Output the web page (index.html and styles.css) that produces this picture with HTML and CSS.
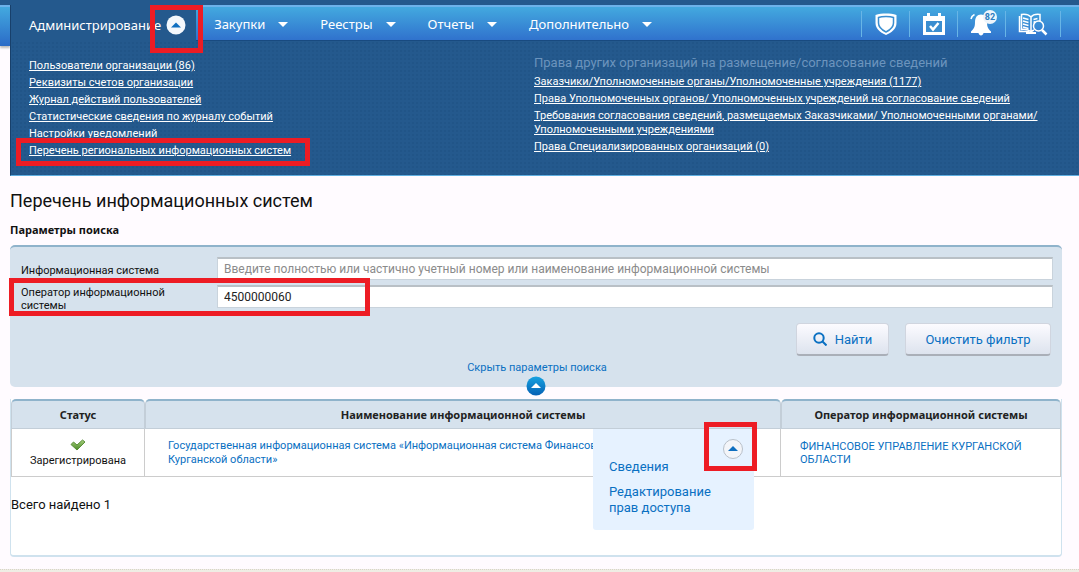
FILE: index.html
```html
<!DOCTYPE html>
<html lang="ru">
<head>
<meta charset="utf-8">
<title>Перечень информационных систем</title>
<meta name="viewport" content="width=device-width, initial-scale=1">
<link rel="stylesheet" href="styles.css">
</head>
<body>
<header class="header">
  <div class="gutter"></div>
  <div class="header-main">
    <nav class="nav">
      <a class="nav-item nav-active" href="#">Администрирование
        <svg class="round" viewBox="0 0 20 20"><circle cx="10" cy="10" r="9.5" fill="#f4f8fc"/><path d="M5 12.5 10 7.500l5 5z" fill="#0f6fc0"/></svg>
      </a>
      <a class="nav-item" href="#">Закупки<i class="caret"></i></a>
      <a class="nav-item" href="#">Реестры<i class="caret"></i></a>
      <a class="nav-item" href="#">Отчеты<i class="caret"></i></a>
      <a class="nav-item" href="#">Дополнительно<i class="caret"></i></a>
      <div class="tools">
        <a class="tool" href="#" aria-label="Безопасность"><svg width="24" height="24" viewBox="0 0 24 24"><path d="M12 1.500C8.500 1.500 4.500 1.500 1.500 3v8c0 6 5 9.500 10.500 12 5.500-2.500 10.500-6 10.500-12V3c-3-1.500-7-1.500-10.500-1.500z" fill="#fff"/><path d="M12 4.500c-3 0-5.500.2-7.500 1v5.500c0 4.500 3.500 7 7.500 9 4-2 7.500-4.500 7.500-9V5.500c-2-.8-4.500-1-7.500-1z" fill="#fff" stroke="#3b8ed0" stroke-width="1.500"/></svg></a>
        <a class="tool" href="#" aria-label="Календарь"><svg width="24" height="24" viewBox="0 0 24 24"><path d="M1 4h4V1h3v3h8V1h3v3h4v19H1z" fill="#fff"/><path d="M4 9h16v11H4z" fill="#3b8ed0"/><path d="m8 14 3 3.500 5.500-6.500" fill="none" stroke="#fff" stroke-width="2.500"/></svg></a>
        <a class="tool" href="#" aria-label="Уведомления"><svg width="28" height="26" viewBox="0 0 28 26"><path d="M3 8c.5-2 1.500-3.500 3.500-4.500" fill="none" stroke="#fff" stroke-width="1.500"/><path d="M13 3.500c-4 0-6 3-6 7.500 0 5-1 6.500-4 9.500V22h7.500c.3 1.500 1.300 2.500 2.500 2.500s2.200-1 2.500-2.500H23v-1.500c-3-3-4-4.500-4-9.500 0-4.500-2-7.500-6-7.500z" fill="#fff"/></svg><span class="badge">82</span></a>
        <a class="tool tool-wide" href="#" aria-label="Справочник"><svg width="30" height="24" viewBox="0 0 30 24"><g fill="none" stroke="#fff" stroke-width="1.500"><path d="M13 5C10.500 2.500 7 2 3.500 2.500v15C7 17 10.500 17.500 13 20zM13 5c2-2.500 5-3 9-2.500V9M1.500 4v15.500H11M13 20c1-1 2-1.700 3-2"/><path d="m5 6 5.500 1.500M5 9l5.500 1.500M5 12l5.500 1.500M5 15l5.500 1.500M15.500 7.500l4-1M15.500 10.500l2-1"/><circle cx="20.500" cy="14" r="5"/></g><path d="m24 18 4.500 4.500" stroke="#fff" stroke-width="2.500"/><path d="M8 20h10v2H8z" fill="#fff"/></svg></a>
      </div>
    </nav>
    <div class="mark mark-tab"></div>
    <div class="menu">
      <ul class="links links-left">
        <li><a href="#">Пользователи организации (86)</a></li>
        <li><a href="#">Реквизиты счетов организации</a></li>
        <li><a href="#">Журнал действий пользователей</a></li>
        <li><a href="#">Статистические сведения по журналу событий</a></li>
        <li><a href="#">Настройки уведомлений</a></li>
        <li class="marked"><a href="#">Перечень региональных информационных систем</a><span class="mark mark-link"></span></li>
      </ul>
      <div class="menu-right">
        <h2 class="menu-title">Права других организаций на размещение/согласование сведений</h2>
        <ul class="links">
          <li><a href="#">Заказчики/Уполномоченные органы/Уполномоченные учреждения (1177)</a></li>
          <li><a href="#">Права Уполномоченных органов/ Уполномоченных учреждений на согласование сведений</a></li>
          <li><a href="#">Требования согласования сведений, размещаемых Заказчиками/ Уполномоченными органами/<br>Уполномоченными учреждениями</a></li>
          <li><a href="#">Права Специализированных организаций (0)</a></li>
        </ul>
      </div>
    </div>
  </div>
</header>
<main class="content">
  <h1 class="title">Перечень информационных систем</h1>
  <h2 class="subtitle">Параметры поиска</h2>
  <form class="filter">
    <div class="field">
      <label for="system">Информационная система</label>
      <input id="system" type="text" placeholder="Введите полностью или частично учетный номер или наименование информационной системы">
    </div>
    <div class="field field-marked">
      <label for="operator">Оператор информационной системы</label>
      <input id="operator" type="text" value="4500000060">
      <span class="mark mark-field"></span>
    </div>
    <div class="actions">
      <button class="button" type="button"><svg width="14" height="14" viewBox="0 0 14 14"><g fill="none" stroke="#0a70c2" stroke-width="2"><circle cx="6" cy="6" r="4.700"/><path d="m9.500 9.500 4 4"/></g></svg>Найти</button>
      <button class="button button-clear" type="button">Очистить фильтр</button>
    </div>
    <a class="collapse" href="#">Скрыть параметры поиска</a>
    <button class="toggle" type="button" aria-label="Свернуть"><svg viewBox="0 0 20 20"><defs><linearGradient id="blue" x2="0" y2="1"><stop stop-color="#17a3e0"/><stop offset="1" stop-color="#0560b4"/></linearGradient></defs><circle cx="10" cy="10" r="9.500" fill="url(#blue)"/><path d="m5 12 5-5 5 5z" fill="#fff"/></svg></button>
  </form>
  <section class="results">
    <table class="table">
      <colgroup><col class="col-status"><col class="col-name"><col class="col-operator"></colgroup>
      <thead><tr><th>Статус</th><th>Наименование информационной системы</th><th>Оператор информационной системы</th></tr></thead>
      <tbody><tr>
        <td class="status"><svg width="16" height="12" viewBox="0 0 16 12"><defs><linearGradient id="green" x2="0" y2="1"><stop stop-color="#a5cf7b"/><stop offset="1" stop-color="#4b8a28"/></linearGradient></defs><path d="M1 5.500 3.500 3 7 6l5.500-5L15 3 7 11z" fill="url(#green)" stroke="#5c8f3c"/></svg><span>Зарегистрирована</span></td>
        <td class="name"><a href="#">Государственная информационная система «Информационная система Финансов<br>Курганской области»</a>
          <div class="popup">
            <svg class="round" viewBox="0 0 20 20"><circle cx="10" cy="10" r="9.500" fill="#f3f5f9" stroke="#b9c0c9"/><path d="m5 12 5-5 5 5z" fill="#0f6fc0"/></svg>
            <a href="#">Сведения</a>
            <a href="#">Редактирование прав доступа</a>
            <span class="mark mark-popup"></span>
          </div></td>
        <td class="operator"><a href="#">ФИНАНСОВОЕ УПРАВЛЕНИЕ КУРГАНСКОЙ ОБЛАСТИ</a></td>
      </tr></tbody>
    </table>
    <p class="total">Всего найдено 1</p>
  </section>
</main>
<footer class="footer"></footer>
</body>
</html>
```
FILE: styles.css
```css
* { box-sizing: border-box; }
body {
  margin: 0;
  background: #fffbff;
  color: #111;
  font: 11px/14px Roboto, "Noto Sans", sans-serif;
}
h1, h2, p, ul { margin: 0; padding: 0; font-weight: normal; }
ul { list-style: none; }
a { color: #0a70c2; text-decoration: none; }
svg { display: block; flex: none; }
button, input { font-family: inherit; }

.header {
  display: grid;
  grid-template-columns: 10px 1fr;
  align-items: start;
  border-top: 5px solid #24598d;
}
.gutter {
  height: 41px;
  border-top: 2px solid #6db2ea;
  background: linear-gradient(#43a9df, #2b6bc7);
  box-shadow: 0 2px 2px #bbb;
}
.header-main {
  position: relative;
  background-color: #24598d;
  background-image: radial-gradient(#215588 1px, transparent 1px);
  background-size: 4px 4px;
  border-left: 1px solid #18406b;
  border-bottom: 1px solid #5faee0;
}
.nav {
  display: flex;
  align-items: stretch;
  height: 36px;
  border-top: 2px solid #6db2ea;
  border-bottom: 1px solid #184a80;
  background: linear-gradient(#43a9df, #3072cd);
}
.nav-item {
  display: flex;
  align-items: center;
  gap: 13px;
  padding: 1px 0 0 32px;
  color: #fff;
  font-family: "Noto Sans", sans-serif;
  font-size: 13px;
}
.nav-active {
  gap: 5px;
  padding: 4px 10px 0 18px;
  margin: -2px -14px -1px 0;
  background: #24598d;
}
.round { width: 20px; height: 20px; }
.caret {
  border: 5px solid transparent;
  border-top-color: #fff;
  border-bottom: 0;
}
.tools { display: flex; align-items: center; margin-left: auto; margin-right: 18px; }
.tool {
  position: relative;
  display: flex;
  align-items: center;
  justify-content: center;
  width: 48px;
  height: 26px;
  border-left: 1px solid #68b5e6;
}
.tool-wide { width: 56px; border-right: 1px solid #68b5e6; }
.badge {
  position: absolute;
  top: -1px;
  right: 8px;
  width: 14px;
  height: 14px;
  border-radius: 50%;
  background: #eef5fb;
  color: #2a7cc0;
  font-size: 9px;
  font-weight: bold;
  text-align: center;
}
.menu {
  display: grid;
  grid-template-columns: 505px 1fr;
  padding: 14px 18px 17px;
}
.links { display: grid; gap: 3px; }
.links a { color: #fff; text-decoration: underline; }
.links-left { align-content: start; padding-top: 4px; }
.menu-title { margin-bottom: 4px; color: #6c94bd; font-size: 13px; line-height: 16px; }
.marked { position: relative; }

.mark { position: absolute; border: 5px solid #ed1c24; pointer-events: none; z-index: 3; }
.mark-tab { left: 139px; top: 0; width: 53px; height: 48px; }
.mark-link { left: -13px; top: -6px; width: 294px; height: 28px; }
.mark-field { left: -12px; top: -7px; width: 361px; height: 38px; }
.mark-popup { right: -3px; top: -7px; width: 53px; height: 49px; }

.content { padding: 15px 17px 0 10px; }
.title { font-size: 18px; line-height: 20px; }
.subtitle {
  margin: 12px 0 8px;
  font: bold 11px/14px "Noto Sans", sans-serif;
}
.filter {
  position: relative;
  display: grid;
  padding: 10px 9px 12px 11px;
  border-top: 2px solid #8fb3cb;
  border-radius: 5px;
  background: #d6e2ed;
}
.field {
  position: relative;
  display: grid;
  grid-template-columns: 196px 1fr;
  height: 28px;
}
.field label { align-self: start; padding-top: 7px; }
.field-marked label { padding: 1px 30px 0 0; line-height: 13px; }
.field input {
  height: 23px;
  padding: 0 6px;
  border: 1px solid #c9d3dc;
  border-top: 2px solid #b9c0c6;
  background: #fff;
  color: #222;
  font-size: 12px;
}
.field input::placeholder { color: #8b8b8b; opacity: 1; }
.actions { display: flex; justify-content: flex-end; gap: 16px; margin: 10px 2px 5px; }
.button {
  display: flex;
  align-items: center;
  justify-content: center;
  gap: 8px;
  width: 93px;
  height: 33px;
  padding: 0;
  border: 1px solid #d0d5df;
  border-bottom: 2px solid #aaafb8;
  border-radius: 4px;
  background: linear-gradient(#fcfbff, #dde3ee);
  color: #0a70c2;
  font-size: 13px;
}
.button-clear { width: 146px; }
.collapse { justify-self: center; }
.toggle {
  position: absolute;
  left: calc(50% - 10px);
  bottom: -9px;
  width: 20px;
  height: 20px;
  padding: 0;
  border: 0;
  background: none;
}
.results {
  margin-top: 12px;
  min-height: 158px;
  border: solid #cfe2ee;
  border-width: 0 1px 2px;
  border-radius: 0 0 4px 4px;
  background: #fff;
}
.table { width: 100%; table-layout: fixed; border-collapse: separate; border-spacing: 0; }
.col-status { width: 134px; }
.col-operator { width: 280px; }
.table th {
  height: 30px;
  padding: 0;
  border: 1px solid #c3ced8;
  border-top: 2px solid #8fb3cb;
  border-radius: 5px 5px 0 0;
  background: #d6e2ed;
  color: #222;
  font-family: "Noto Sans", sans-serif;
}
.table td {
  height: 48px;
  padding: 0;
  border: solid #ccc;
  border-width: 0 1px 1px 0;
}
.table td:first-child { border-left-width: 1px; }
.table .status { text-align: center; }
.status svg { margin: 2px auto 3px; }
.name { position: relative; white-space: nowrap; }
.table .name { padding-left: 23px; }
.table .operator { padding: 0 30px 0 19px; }
.operator a { display: block; line-height: 13px; }
.popup {
  position: absolute;
  top: 0;
  right: 26px;
  z-index: 2;
  display: grid;
  gap: 9px;
  width: 161px;
  padding: 10px 16px 14px;
  border-radius: 0 0 3px 3px;
  background: #e6f2ff;
  font-size: 13px;
  line-height: 16px;
  white-space: normal;
}
.popup .round { justify-self: end; margin-right: -5px; margin-bottom: -9px; }
.total { margin-top: 20px; font-size: 13px; line-height: 16px; }
.footer { margin-top: 12px; height: 3px; border-top: 1px dotted #d8d5c8; background: #efede4; }
```
